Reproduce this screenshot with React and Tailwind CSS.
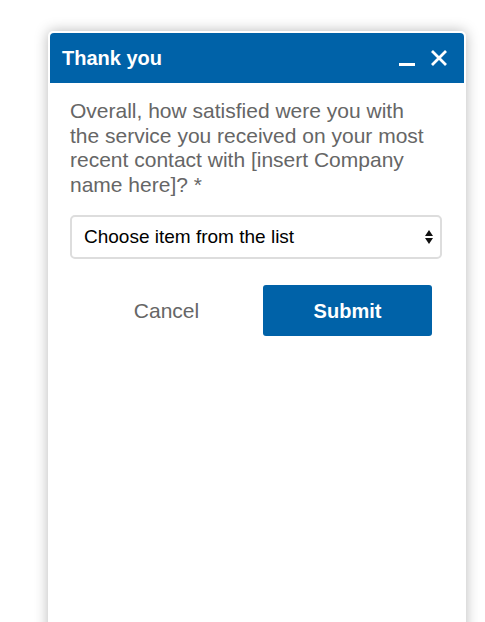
import React from 'react';

const font = { fontFamily: '"Liberation Sans", Arial, sans-serif' };

const SurveyDialog = () => {
  return (
    <div className="w-[418px] h-[620px] bg-white p-[2px] rounded-[5px] shadow-[0_0_14px_rgba(0,0,0,0.28)]">
      <div className="h-[50px] bg-[#0062a8] rounded-t-[4px] flex items-center pl-3 pr-4">
        <h2 className="text-white font-bold text-[20px] flex-1">Thank you</h2>
        <div className="flex items-center gap-[14px]">
          <svg width="18" height="18" viewBox="0 0 18 18">
            <rect x="1" y="14" width="16" height="3" fill="#fff" />
          </svg>
          <svg width="18" height="18" viewBox="0 0 18 18">
            <path d="M2 2 L16 16 M16 2 L2 16" stroke="#fff" strokeWidth="2.8" />
          </svg>
        </div>
      </div>

      <div className="pl-5 pr-[22px] pt-[16px]">
        <p className="max-w-[362px] text-[21px] leading-[24.5px] text-[#666]">
          Overall, how satisfied were you with the service you received on your most recent contact with [insert Company name here]? *
        </p>

        <div className="mt-[18px] h-[44px] border-2 border-[#ddd] rounded-[5px] flex items-center pl-3 pr-[6px]">
          <span className="flex-1 text-[19px] text-black">Choose item from the list</span>
          <svg width="10" height="18" viewBox="0 0 10 18">
            <path d="M5 2 L9 8 L1 8 Z M1 10 L9 10 L5 16 Z" fill="#111" />
          </svg>
        </div>

        <div className="mt-[26px] flex gap-[12px] pl-[12px]">
          <button className="w-[169px] h-[51px] text-[21px] text-[#666]">Cancel</button>
          <button className="w-[169px] h-[51px] rounded-[3px] bg-[#0062a8] text-white font-bold text-[20px]">
            Submit
          </button>
        </div>
      </div>
    </div>
  );
};

export default function App() {
  return (
    <div className="min-h-screen bg-white pt-[31px] pl-[48px] overflow-hidden h-[622px]" style={font}>
      <SurveyDialog />
    </div>
  );
}
